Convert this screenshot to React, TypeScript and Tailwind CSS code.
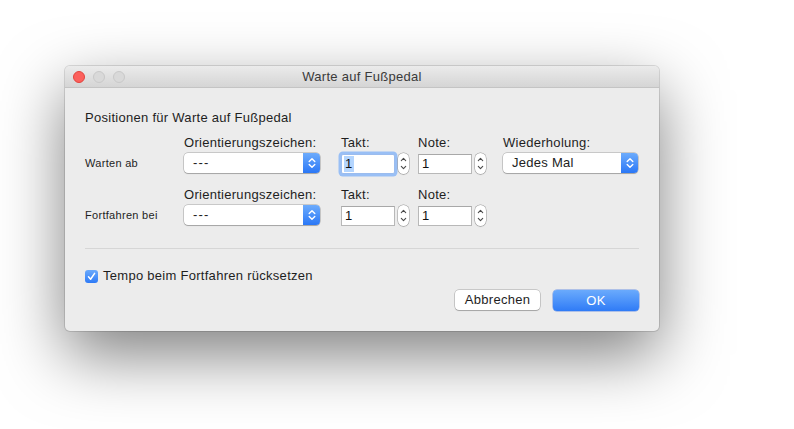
import React from "react";

function PopupArrows() {
  return (
    <svg width="8" height="12" viewBox="0 0 8 12" fill="none">
      <path d="M1.2 4.6 L4 1.8 L6.8 4.6" stroke="white" strokeWidth="1.4" strokeLinecap="round" strokeLinejoin="round" />
      <path d="M1.2 7.4 L4 10.2 L6.8 7.4" stroke="white" strokeWidth="1.4" strokeLinecap="round" strokeLinejoin="round" />
    </svg>
  );
}

function StepArrows() {
  return (
    <svg width="7" height="15" viewBox="0 0 7 15" fill="none">
      <path d="M1.3 4.6 L3.5 2.3 L5.7 4.6" stroke="#4a4a4a" strokeWidth="1.1" strokeLinecap="round" strokeLinejoin="round" />
      <path d="M1.3 10.4 L3.5 12.7 L5.7 10.4" stroke="#4a4a4a" strokeWidth="1.1" strokeLinecap="round" strokeLinejoin="round" />
    </svg>
  );
}

function Popup({ value, width, dashes }: { value: string; width: string; dashes?: boolean }) {
  return (
    <div className={`flex h-[20px] ${width} items-center rounded-[4px] bg-white shadow-[0_0_0_0.5px_rgba(0,0,0,0.3),0_1px_1px_rgba(0,0,0,0.18)]`}>
      <span className={`flex-1 pl-[9px] text-[13px] leading-[16px] text-[#222] ${dashes ? "tracking-[1.2px]" : ""}`}>{value}</span>
      <div className="flex h-full w-[17px] items-center justify-center rounded-r-[4px] bg-gradient-to-b from-[#6cabfc] to-[#2a77f6]">
        <PopupArrows />
      </div>
    </div>
  );
}

function NumberField({ focused }: { focused?: boolean }) {
  return (
    <div className="flex items-center">
      {focused ? (
        <div className="flex h-[20px] w-[54px] items-center rounded-[2px] border border-[#9bbcee] bg-white pl-[2px] shadow-[0_0_0_2.5px_#99bff5]">
          <span className="bg-[#b4d5fe] px-[1px] text-[13px] leading-[16px] text-[#111]">1</span>
        </div>
      ) : (
        <div className="flex h-[20px] w-[54px] items-center border border-[#b8b8b8] border-t-[#a8a8a8] bg-white pl-[3px]">
          <span className="text-[13px] leading-[16px] text-[#111]">1</span>
        </div>
      )}
      <div className="ml-[3px] flex h-[21px] w-[11px] items-center justify-center rounded-[6px] bg-white shadow-[0_0_0_0.5px_rgba(0,0,0,0.35),0_1px_1px_rgba(0,0,0,0.12)]">
        <StepArrows />
      </div>
    </div>
  );
}

function Header({ children }: { children: React.ReactNode }) {
  return <div className="mb-[2px] h-[16px] text-[13px] leading-[16px] text-[#1e1e1e]">{children}</div>;
}

function FormRow({ label, repeat }: { label: string; repeat?: boolean }) {
  return (
    <div className="flex">
      <div className="flex w-[99px] flex-col">
        <div className="mb-[2px] h-[16px]" />
        <div className="flex h-[20px] items-center text-[11px] tracking-[0.3px] text-[#1e1e1e]">{label}</div>
      </div>
      <div className="flex w-[136px] flex-col">
        <Header>Orientierungszeichen:</Header>
        <Popup value="---" width="w-[136px]" dashes />
      </div>
      <div className="ml-[21px] flex w-[68px] flex-col">
        <Header>Takt:</Header>
        <NumberField focused={repeat} />
      </div>
      <div className="ml-[9px] flex w-[68px] flex-col">
        <Header>Note:</Header>
        <NumberField />
      </div>
      {repeat && (
        <div className="ml-[17px] flex w-[135px] flex-col">
          <Header>Wiederholung:</Header>
          <Popup value="Jedes Mal" width="w-[135px]" />
        </div>
      )}
    </div>
  );
}

export default function App() {
  return (
    <div className="min-h-[429px] w-[794px] bg-white pl-[65px] pt-[66px] font-['Liberation_Sans',sans-serif] tracking-[0.28px]">
      <div className="h-[265px] w-[594px] overflow-hidden rounded-[5px] bg-[#ececec] shadow-[0_0_0_1px_rgba(0,0,0,0.12),0_24px_65px_rgba(0,0,0,0.5)]">
        {/* Title bar */}
        <div className="relative flex h-[22px] items-center border-b border-[#c4c4c4] bg-gradient-to-b from-[#ebebeb] to-[#d5d5d5]">
          <div className="flex items-center gap-[8px] pl-[8px]">
            <div className="h-[12px] w-[12px] rounded-full border border-[#e0443e] bg-[#fc605c]" />
            <div className="h-[12px] w-[12px] rounded-full border border-[#c8c8c8] bg-[#d9d9d9]" />
            <div className="h-[12px] w-[12px] rounded-full border border-[#c8c8c8] bg-[#d9d9d9]" />
          </div>
          <div className="absolute inset-0 flex items-center justify-center text-[13px] text-[#3a3a3a]">Warte auf Fußpedal</div>
        </div>

        {/* Body */}
        <div className="flex flex-col px-[20px] pt-[22px]">
          <div className="h-[16px] text-[13px] leading-[16px] text-[#1e1e1e]">Positionen für Warte auf Fußpedal</div>
          <div className="mt-[9px]">
            <FormRow label="Warten ab" repeat />
          </div>
          <div className="mt-[13px]">
            <FormRow label="Fortfahren bei" />
          </div>
          <div className="mt-[22px] h-px w-[554px] bg-[#d6d6d6]" />
          <div className="mt-[19px] flex items-center">
            <div className="flex h-[13px] w-[13px] items-center justify-center rounded-[3px] bg-gradient-to-b from-[#6aa9fb] to-[#2d7af6]">
              <svg width="9" height="9" viewBox="0 0 9 9" fill="none">
                <path d="M1.5 4.8 L3.6 7.2 L7.6 1.4" stroke="white" strokeWidth="1.5" strokeLinecap="round" strokeLinejoin="round" />
              </svg>
            </div>
            <span className="ml-[5px] text-[13px] leading-[16px] text-[#1e1e1e]">Tempo beim Fortfahren rücksetzen</span>
          </div>
          <div className="mt-[6px] flex justify-end gap-[13px]">
            <div className="flex h-[20px] w-[85px] items-center justify-center rounded-[4px] bg-white text-[13px] text-[#1e1e1e] shadow-[0_0_0_0.5px_rgba(0,0,0,0.3),0_1px_1px_rgba(0,0,0,0.18)]">
              Abbrechen
            </div>
            <div className="flex h-[21px] w-[86px] items-center justify-center rounded-[4px] bg-gradient-to-b from-[#6aaafc] to-[#2f7bf6] text-[13px] text-white shadow-[0_0_0_0.5px_rgba(30,90,220,0.6)]">
              OK
            </div>
          </div>
        </div>
      </div>
    </div>
  );
}
